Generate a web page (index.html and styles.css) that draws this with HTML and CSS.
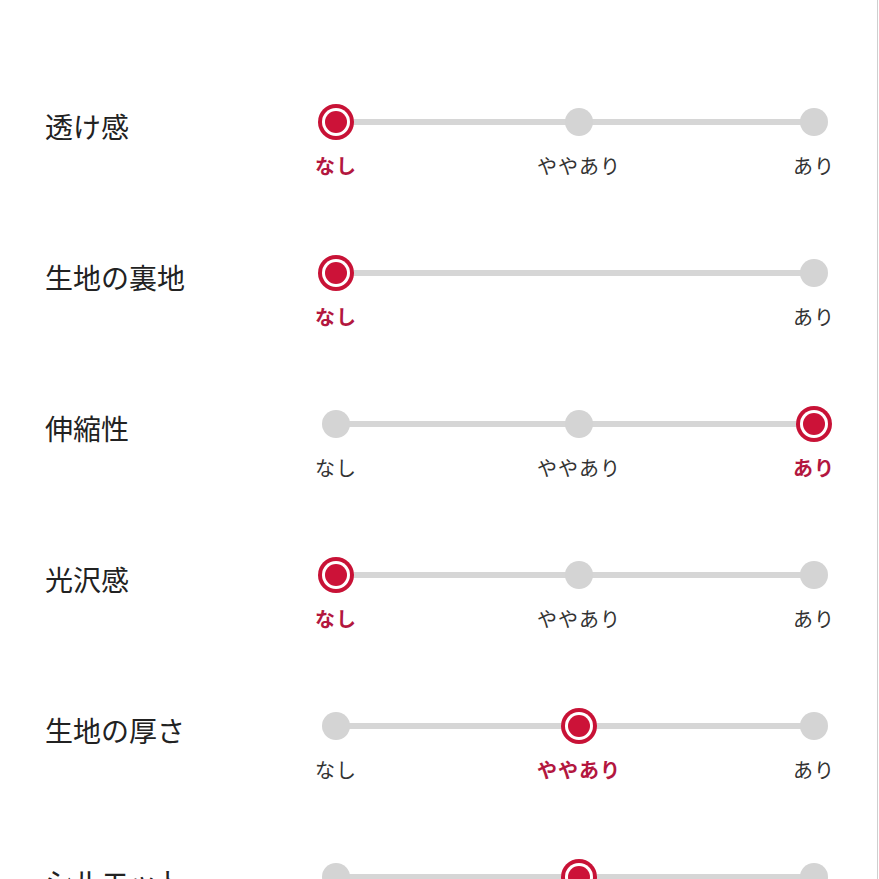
FILE: index.html
```html
<!DOCTYPE html>
<html lang="ja">
<head>
  <meta charset="UTF-8">
  <meta name="viewport" content="width=device-width, initial-scale=1.0">
  <title>生地の特徴</title>
  <link rel="stylesheet" href="styles.css">
</head>
<body>
  <div class="page">

    <div class="row">
      <div class="name">透け感</div>
      <div class="scale">
        <div class="stop on"><span class="dot"></span><span class="txt">なし</span></div>
        <div class="stop"><span class="dot"></span><span class="txt">ややあり</span></div>
        <div class="stop"><span class="dot"></span><span class="txt">あり</span></div>
      </div>
    </div>

    <div class="row">
      <div class="name">生地の裏地</div>
      <div class="scale">
        <div class="stop on"><span class="dot"></span><span class="txt">なし</span></div>
        <div class="stop"><span class="dot"></span><span class="txt">あり</span></div>
      </div>
    </div>

    <div class="row">
      <div class="name">伸縮性</div>
      <div class="scale">
        <div class="stop"><span class="dot"></span><span class="txt">なし</span></div>
        <div class="stop"><span class="dot"></span><span class="txt">ややあり</span></div>
        <div class="stop on"><span class="dot"></span><span class="txt">あり</span></div>
      </div>
    </div>

    <div class="row">
      <div class="name">光沢感</div>
      <div class="scale">
        <div class="stop on"><span class="dot"></span><span class="txt">なし</span></div>
        <div class="stop"><span class="dot"></span><span class="txt">ややあり</span></div>
        <div class="stop"><span class="dot"></span><span class="txt">あり</span></div>
      </div>
    </div>

    <div class="row">
      <div class="name">生地の厚さ</div>
      <div class="scale">
        <div class="stop"><span class="dot"></span><span class="txt">なし</span></div>
        <div class="stop on"><span class="dot"></span><span class="txt">ややあり</span></div>
        <div class="stop"><span class="dot"></span><span class="txt">あり</span></div>
      </div>
    </div>

    <div class="row">
      <div class="name">シルエット</div>
      <div class="scale">
        <div class="stop"><span class="dot"></span><span class="txt">細め</span></div>
        <div class="stop on"><span class="dot"></span><span class="txt">普通</span></div>
        <div class="stop"><span class="dot"></span><span class="txt">太め</span></div>
      </div>
    </div>

  </div>
</body>
</html>
```

FILE: styles.css
```css
html, body {
  margin: 0;
  padding: 0;
  background: #fff;
  overflow: hidden;
}
body {
  font-family: "Noto Sans CJK JP", "Noto Sans", sans-serif;
  color: #222;
}
.page {
  width: 878px;
  height: 879px;
  border-right: 1px solid #cfcfcf;
  padding-top: 104px;
  box-sizing: border-box;
  overflow: hidden;
}
.row {
  display: flex;
  align-items: flex-start;
  margin-bottom: 77px;
}
.name {
  width: 265px;
  padding-left: 45px;
  margin-top: 3px;
  font-size: 28px;
  line-height: 38px;
  color: #222;
  white-space: nowrap;
}
.scale {
  position: relative;
  width: 530px;
  display: flex;
  justify-content: space-between;
}
/* grey rail running between the first and last dot */
.scale::before {
  content: "";
  position: absolute;
  left: 26px;
  right: 26px;
  top: 15px;
  height: 6px;
  background: #d6d6d6;
}
.stop {
  position: relative;
  width: 52px;
  display: flex;
  flex-direction: column;
  align-items: center;
}
.stop + .stop:not(:last-child) {
  margin-left: 8px;
}
.dot {
  width: 28px;
  height: 28px;
  margin: 4px 0;
  border-radius: 50%;
  background: #d4d4d4;
}
.stop.on .dot {
  width: 22px;
  height: 22px;
  margin: 7px 0;
  background: #cc1238;
  box-shadow: 0 0 0 3px #fff, 0 0 0 7px #c81236;
}
.txt {
  margin-top: 14px;
  font-size: 20px;
  line-height: 24px;
  color: #333;
  white-space: nowrap;
  letter-spacing: 1px;
}
.stop.on .txt {
  color: #b3173f;
  font-weight: bold;
}
```
